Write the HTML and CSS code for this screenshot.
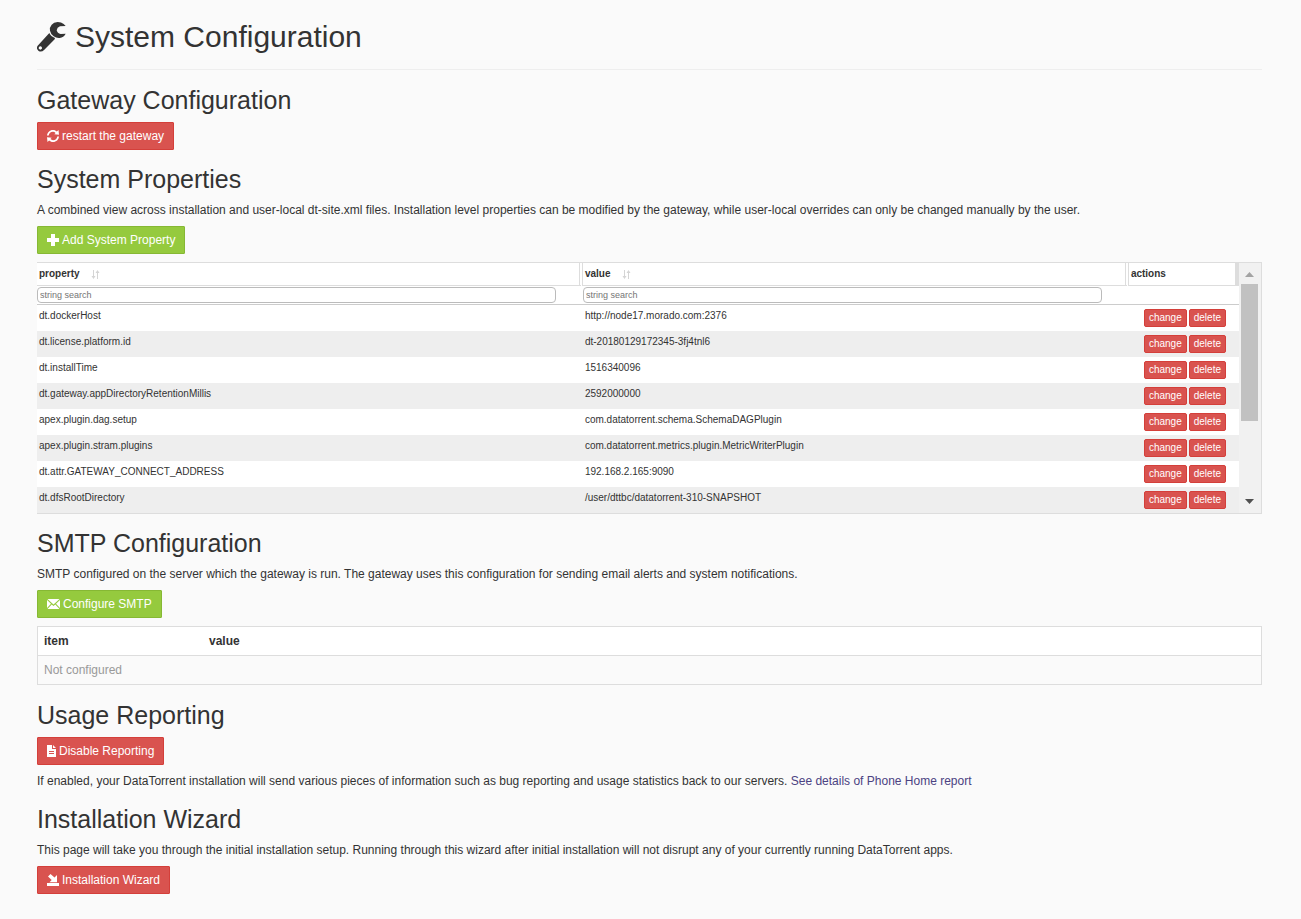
FILE: index.html
```html
<!DOCTYPE html>
<html lang="en">
<head>
<meta charset="utf-8">
<title>System Configuration</title>
<link rel="stylesheet" href="styles.css">
</head>
<body>
<svg class="defs" aria-hidden="true">
  <symbol id="sort" viewBox="0 0 9 9"><path d="M2 0h1v6h1.500L2.500 9 .5 6H2zM6 9V3H4.500l2-3 2 3H7v6z"/></symbol>
</svg>
<main class="page">
  <header class="page-header">
    <h1><svg class="wrench" viewBox="0 0 87 90" aria-hidden="true"><path d="M86 12 80 6Q73 0 62 0Q50 0 44 8Q37 16 39 26Q41 36 50 43Q58 49 68 48Q80 46 86 35L71 36Q61 34 59 25Q60 16 69 13Z"/><path fill-rule="evenodd" d="M37 33Q41 43 54 48L53 52 22 83Q13 92 5 87Q-4 80 2 71ZM10 73a5 5 0 1 0 .1 0Z"/></svg>System Configuration</h1>
  </header>

  <section>
    <h2>Gateway Configuration</h2>
    <button class="btn danger" type="button"><svg width="12" height="12" viewBox="0 0 12 12" aria-hidden="true"><path d="M0 5.500C.3 2.500 2.600 0 6 0c1.600 0 2.900.6 3.900 1.500L11.500 0 12 4.800 7.300 4.300 8.600 2.900C7.800 2.200 7 1.700 6 1.700 3.600 1.700 2 3.300 1.700 5.500zM12 6.500C11.700 9.500 9.400 12 6 12c-1.600 0-2.900-.6-3.900-1.500L.5 12 0 7.200l4.700.5L3.400 9.100c.8.7 1.600 1.200 2.600 1.200 2.400 0 4-1.600 4.300-3.800z"/></svg>restart the gateway</button>
  </section>

  <section>
    <h2>System Properties</h2>
    <p>A combined view across installation and user-local dt-site.xml files. Installation level properties can be modified by the gateway, while user-local overrides can only be changed manually by the user.</p>
    <button class="btn success" type="button"><svg width="12" height="12" viewBox="0 0 12 12" aria-hidden="true"><path d="M4 0h4v4h4v4H8v4H4V8H0V4h4z"/></svg>Add System Property</button>
    <div class="grid">
      <table class="properties">
        <colgroup><col class="col-main"><col class="col-main"><col></colgroup>
        <thead>
          <tr class="titles">
            <th scope="col"><div class="title">property<svg class="sort" aria-hidden="true"><use href="#sort"/></svg></div></th>
            <th scope="col"><div class="title">value<svg class="sort" aria-hidden="true"><use href="#sort"/></svg></div></th>
            <th scope="col" class="last"><div class="title">actions</div></th>
          </tr>
          <tr class="filters">
            <td><input type="text" placeholder="string search" aria-label="Search property"></td>
            <td><input type="text" placeholder="string search" aria-label="Search value"></td>
            <td></td>
          </tr>
        </thead>
        <tbody>
          <tr><td>dt.dockerHost</td><td>http://node17.morado.com:2376</td><td><div class="actions"><button class="mini" type="button">change</button><button class="mini" type="button">delete</button></div></td></tr>
          <tr><td>dt.license.platform.id</td><td>dt-20180129172345-3fj4tnl6</td><td><div class="actions"><button class="mini" type="button">change</button><button class="mini" type="button">delete</button></div></td></tr>
          <tr><td>dt.installTime</td><td>1516340096</td><td><div class="actions"><button class="mini" type="button">change</button><button class="mini" type="button">delete</button></div></td></tr>
          <tr><td>dt.gateway.appDirectoryRetentionMillis</td><td>2592000000</td><td><div class="actions"><button class="mini" type="button">change</button><button class="mini" type="button">delete</button></div></td></tr>
          <tr><td>apex.plugin.dag.setup</td><td>com.datatorrent.schema.SchemaDAGPlugin</td><td><div class="actions"><button class="mini" type="button">change</button><button class="mini" type="button">delete</button></div></td></tr>
          <tr><td>apex.plugin.stram.plugins</td><td>com.datatorrent.metrics.plugin.MetricWriterPlugin</td><td><div class="actions"><button class="mini" type="button">change</button><button class="mini" type="button">delete</button></div></td></tr>
          <tr><td>dt.attr.GATEWAY_CONNECT_ADDRESS</td><td>192.168.2.165:9090</td><td><div class="actions"><button class="mini" type="button">change</button><button class="mini" type="button">delete</button></div></td></tr>
          <tr><td>dt.dfsRootDirectory</td><td>/user/dttbc/datatorrent-310-SNAPSHOT</td><td><div class="actions"><button class="mini" type="button">change</button><button class="mini" type="button">delete</button></div></td></tr>
        </tbody>
      </table>
      <div class="scrollbar" aria-hidden="true">
        <svg class="arrow up" viewBox="0 0 9 5"><path d="M0 5 4.500 0 9 5z"/></svg>
        <div class="track"><div class="thumb"></div></div>
        <svg class="arrow down" viewBox="0 0 9 5"><path d="M0 0h9L4.500 5z"/></svg>
      </div>
    </div>
  </section>

  <section>
    <h2>SMTP Configuration</h2>
    <p>SMTP configured on the server which the gateway is run. The gateway uses this configuration for sending email alerts and system notifications.</p>
    <button class="btn success" type="button"><svg width="13" height="12" viewBox="0 0 13 12" aria-hidden="true"><path d="M.5 1h12L6.500 6.500zM0 2l4 3.800L0 10zM13 2v8L9 5.800zM4.700 6.500l1.800 1.600 1.800-1.600L12.500 11H.5z"/></svg>Configure SMTP</button>
    <table class="smtp">
      <colgroup><col class="col-item"><col></colgroup>
      <thead><tr><th scope="col">item</th><th scope="col">value</th></tr></thead>
      <tbody><tr><td colspan="2">Not configured</td></tr></tbody>
    </table>
  </section>

  <section>
    <h2>Usage Reporting</h2>
    <button class="btn danger" type="button"><svg width="9" height="12" viewBox="0 0 9 12" aria-hidden="true"><path fill-rule="evenodd" d="M0 0h5v4h4v8H0zM6 0l3 3H6zM2 6v1h5V6zM2 8v1h5V8z"/></svg>Disable Reporting</button>
    <p class="after">If enabled, your DataTorrent installation will send various pieces of information such as bug reporting and usage statistics back to our servers. <a href="#phone-home">See details of Phone Home report</a></p>
  </section>

  <section>
    <h2>Installation Wizard</h2>
    <p>This page will take you through the initial installation setup. Running through this wizard after initial installation will not disrupt any of your currently running DataTorrent apps.</p>
    <button class="btn danger" type="button"><svg width="12" height="12" viewBox="0 0 12 12" aria-hidden="true"><path d="M0 9h12v3H0zM2.500 8.200 4.700 6 1 2.500 3.500 0 7.500 3.600 10 1v7.200z"/></svg>Installation Wizard</button>
  </section>
</main>
</body>
</html>
```
FILE: styles.css
```css
* { box-sizing: border-box; }

body {
  margin: 0;
  background: #fafafa;
  color: #333;
  font: 12px/17px "Liberation Sans", Arial, sans-serif;
}

.defs { display: none; }

.page { padding: 20px 39px 26px 37px; }

.page-header { border-bottom: 1px solid #eee; padding-bottom: 16px; }

h1, h2 { margin: 0; font-weight: 400; }

h1 {
  display: flex;
  align-items: center;
  gap: 9px;
  font-size: 30px;
  line-height: 33px;
}

.wrench { width: 29px; height: 30px; fill: #333; }

h2 { margin: 16px 0 8px; font-size: 25px; line-height: 28px; }

p { margin: 0 0 7px; padding-top: 1px; }

.btn + .after { margin-top: 7px; }

a { color: #4b4282; text-decoration: none; }

.btn {
  display: flex;
  align-items: center;
  gap: 3px;
  height: 28px;
  padding: 0 9px;
  border: 1px solid;
  border-radius: 1px;
  color: #fff;
  font: inherit;
}

.btn svg, .arrow { fill: currentColor; flex: none; }

.danger, .mini { background: #d9534f; border-color: #d43f3a; }

.success { background: #95ca3e; border-color: #86b834; }

section + section h2 { margin-top: 15px; }

.grid {
  display: flex;
  margin-top: 8px;
  border: solid #ddd;
  border-width: 1px 1px 1px 0;
  background: #fff;
}

table { border-collapse: separate; border-spacing: 0; }

.properties {
  flex: 1;
  min-width: 0;
  table-layout: fixed;
  font-size: 10px;
  line-height: 14px;
}

.col-main { width: 45.42%; }

.properties td { padding: 0; }

.titles th {
  height: 23px;
  padding: 0;
  border-right: 4px double #ddd;
  border-bottom: 1px solid #ddd;
  text-align: left;
}

.titles .last { border-right-style: solid; }

.title { display: flex; align-items: center; gap: 11px; padding-left: 2px; }

.sort { width: 9px; height: 9px; fill: #d5d5d5; }

.filters td { height: 19px; border-bottom: 1px solid #ccc; vertical-align: middle; }

.filters input {
  display: block;
  width: 95%;
  height: 16px;
  padding: 0 2px;
  border: 1px solid #bbb;
  border-radius: 4px;
  background: #fff;
  font: 9px/14px "Liberation Sans", Arial, sans-serif;
}

.filters input::placeholder { color: #757575; }

.properties tbody td { height: 26px; padding: 4px 2px; vertical-align: top; }

.properties tbody tr:nth-child(even) { background: #eee; }

.actions { display: flex; justify-content: flex-end; gap: 2px; padding-right: 11px; }

.mini {
  height: 18px;
  padding: 0 4px;
  border: 1px solid #d43f3a;
  border-radius: 2px;
  color: #fff;
  font: 10px/16px "Liberation Sans", Arial, sans-serif;
}

.scrollbar {
  display: flex;
  flex-direction: column;
  align-items: center;
  width: 22px;
  padding: 9px 3px 9px 2px;
  background: #f1f1f1;
}

.arrow { width: 9px; height: 5px; }

.up { color: #a3a3a3; }

.down { color: #505050; }

.track { flex: 1; width: 100%; padding: 7px 0; }

.thumb { height: 66%; background: #c1c1c1; }

.smtp { width: 100%; margin: 8px 0 16px; border: 1px solid #ddd; }

.col-item { width: 165px; }

.smtp th, .smtp td { padding: 6px 6px 5px; text-align: left; }

.smtp th { background: #fff; border-bottom: 1px solid #ddd; }

.smtp td { color: #999; }
```
